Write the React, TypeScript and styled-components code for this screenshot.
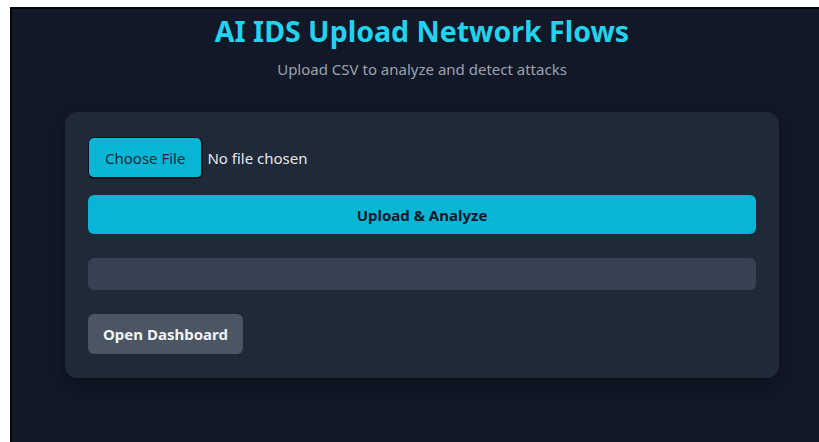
import React from 'react'
import styled, { createGlobalStyle } from 'styled-components'

const GlobalStyle = createGlobalStyle`
  html, body {
    margin: 0;
    padding: 0;
    background: #ffffff;
    overflow: hidden;
  }
  body {
    padding: 7px 0 0 10px;
    font-family: "Noto Sans", "Open Sans", sans-serif;
  }
`

const Page = styled.div`
  width: 822px;
  min-height: 440px;
  box-sizing: border-box;
  background: #111827;
  border-top: 2px solid #050608;
  border-left: 2px solid #050608;
  padding-top: 4px;
  color: #e5e7eb;
`

const Header = styled.header`
  text-align: center;
  margin-bottom: 33px;
`

const Title = styled.h1`
  margin: 0;
  font-size: 28.5px;
  line-height: 36px;
  font-weight: 700;
  color: #22d3ee;
`

const Subtitle = styled.p`
  margin: 10px 0 0;
  font-size: 15px;
  line-height: 20px;
  color: #9ca3af;
`

const Card = styled.section`
  width: 714px;
  margin: 0 auto;
  box-sizing: border-box;
  padding: 25px 23px 24px;
  background: #1f2937;
  border-radius: 12px;
  box-shadow: 0 6px 16px rgba(0, 0, 0, 0.35);
  display: flex;
  flex-direction: column;
`

const FileInput = styled.input`
  font-family: inherit;
  font-size: 15px;
  color: #e5e7eb;
  height: 42px;
  margin-bottom: 16px;

  &::file-selector-button {
    height: 42px;
    padding: 0 16px;
    margin-right: 4px;
    background: #06b6d4;
    color: #1f2937;
    font-family: inherit;
    font-size: 15px;
    border: 1px solid #0b1220;
    border-right-width: 2px;
    border-bottom-width: 2px;
    border-radius: 6px;
    cursor: pointer;
  }
`

const Button = styled.button<{ $tone: 'primary' | 'muted' }>`
  font-family: inherit;
  font-size: 15px;
  font-weight: 700;
  border: none;
  border-radius: 6px;
  cursor: pointer;
  background: ${p => (p.$tone === 'primary' ? '#06b6d4' : '#4b5563')};
  color: ${p => (p.$tone === 'primary' ? '#111827' : '#f3f4f6')};
`

const UploadButton = styled(Button)`
  width: 100%;
  height: 39px;
`

const DashboardButton = styled(Button)`
  align-self: flex-start;
  height: 40px;
  padding: 0 15px;
`

const Progress = styled.div`
  height: 32px;
  margin: 24px 0;
  border-radius: 6px;
  background: #374151;
  overflow: hidden;
`

const ProgressFill = styled.div`
  height: 100%;
  background: #06b6d4;
`

export default function App() {
  const [progress] = React.useState(0)

  return (
    <>
      <GlobalStyle />
      <Page>
        <Header>
          <Title>AI IDS Upload Network Flows</Title>
          <Subtitle>Upload CSV to analyze and detect attacks</Subtitle>
        </Header>
        <Card>
          <FileInput type="file" accept=".csv" />
          <UploadButton $tone="primary">Upload &amp; Analyze</UploadButton>
          <Progress>
            <ProgressFill style={{ width: `${progress}%` }} />
          </Progress>
          <DashboardButton $tone="muted">Open Dashboard</DashboardButton>
        </Card>
      </Page>
    </>
  )
}
